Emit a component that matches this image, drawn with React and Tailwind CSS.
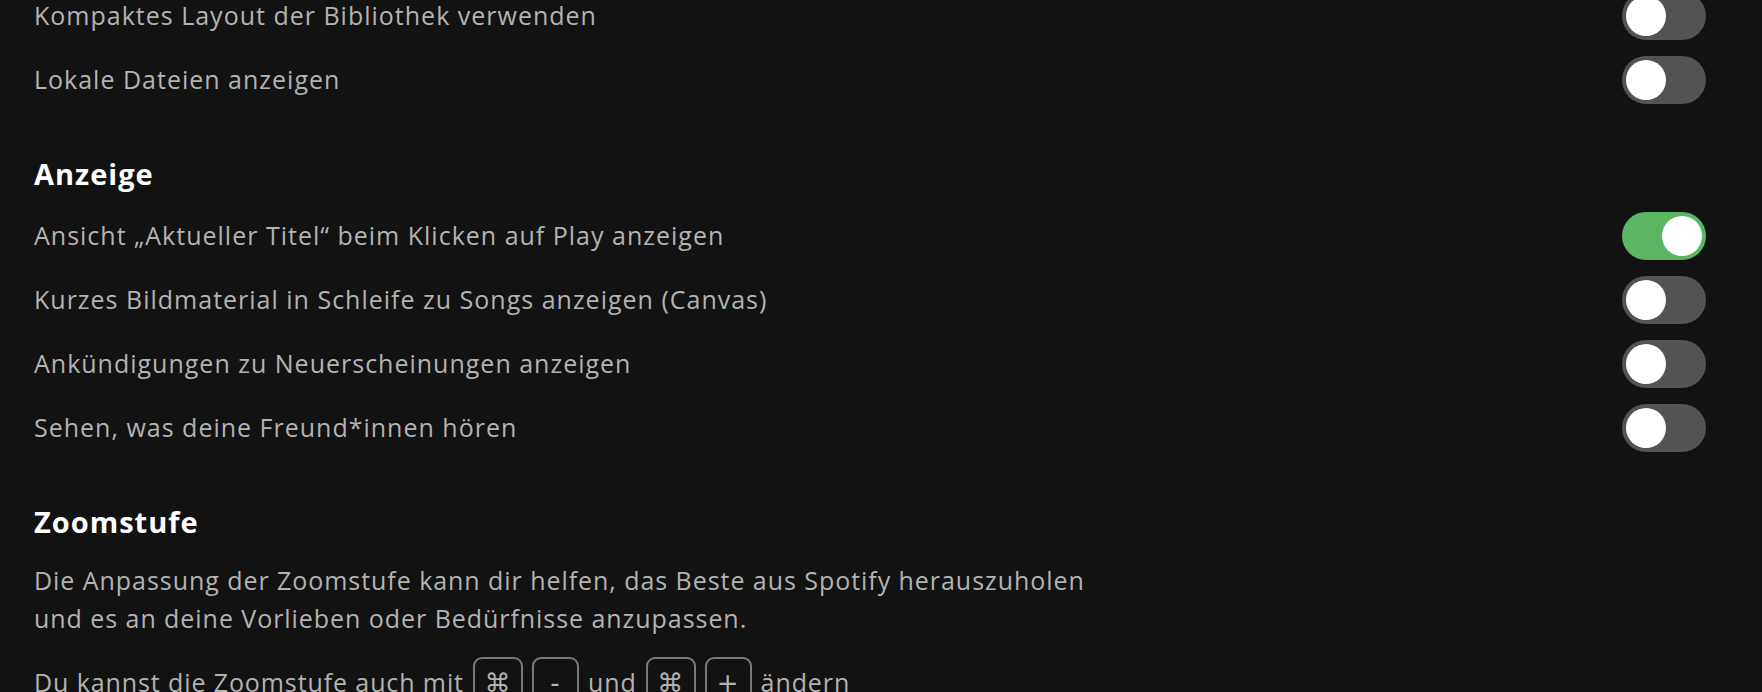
import { useState } from "react";

const font = { fontFamily: "'Open Sans', 'Noto Sans', sans-serif" };

function Toggle({ on }) {
  const [checked, setChecked] = useState(on);
  return (
    <button
      onClick={() => setChecked((c) => !c)}
      className={
        "relative h-[48px] w-[84px] shrink-0 rounded-full transition-colors " +
        (checked ? "bg-[#5bb663]" : "bg-[#535353]")
      }
    >
      <span
        className={
          "absolute top-[4px] h-[40px] w-[40px] rounded-full bg-white transition-all " +
          (checked ? "left-[40px]" : "left-[4px]")
        }
      />
    </button>
  );
}

function Row({ label, on }) {
  return (
    <div className="flex h-[48px] items-center justify-between">
      <span className="text-[25px] tracking-[1px] text-[#b3b3b3]">{label}</span>
      <Toggle on={on} />
    </div>
  );
}

function Heading({ children }) {
  return (
    <h2 className="flex h-[36px] items-center text-[29px] font-bold tracking-[1px] text-white">
      {children}
    </h2>
  );
}

function Kbd({ children, w }) {
  return (
    <span
      className={
        "inline-flex h-[52px] items-center justify-center rounded-[9px] border-2 border-[#7a7a7a] text-[26px] text-[#b3b3b3] " +
        w
      }
      style={{ fontFamily: "'DejaVu Sans', sans-serif" }}
    >
      {children}
    </span>
  );
}

export default function App() {
  return (
    <div className="h-[692px] w-full overflow-hidden bg-[#121212]" style={font}>
      <div className="-mt-[8px] pl-[34px] pr-[56px]">
        <div className="flex flex-col gap-[16px]">
          <Row label="Kompaktes Layout der Bibliothek verwenden" on={false} />
          <Row label="Lokale Dateien anzeigen" on={false} />
        </div>

        <div className="mt-[52px]">
          <Heading>Anzeige</Heading>
          <div className="mt-[20px] flex flex-col gap-[16px]">
            <Row label="Ansicht „Aktueller Titel“ beim Klicken auf Play anzeigen" on={true} />
            <Row label="Kurzes Bildmaterial in Schleife zu Songs anzeigen (Canvas)" on={false} />
            <Row label="Ankündigungen zu Neuerscheinungen anzeigen" on={false} />
            <Row label="Sehen, was deine Freund*innen hören" on={false} />
          </div>
        </div>

        <div className="mt-[52px]">
          <Heading>Zoomstufe</Heading>
          <p className="mt-[21px] max-w-[1100px] text-[25px] leading-[38px] tracking-[0.95px] text-[#b3b3b3]">
            Die Anpassung der Zoomstufe kann dir helfen, das Beste aus Spotify herauszuholen
            <br />
            und es an deine Vorlieben oder Bedürfnisse anzupassen.
          </p>
          <div className="mt-[20px] flex items-center gap-[9px] text-[25px] tracking-[0.9px] text-[#b3b3b3]">
            <span>Du kannst die Zoomstufe auch mit</span>
            <Kbd w="w-[50px]">⌘</Kbd>
            <Kbd w="w-[47px]">-</Kbd>
            <span>und</span>
            <Kbd w="w-[50px]">⌘</Kbd>
            <Kbd w="w-[47px]">+</Kbd>
            <span>ändern</span>
          </div>
        </div>
      </div>
    </div>
  );
}
